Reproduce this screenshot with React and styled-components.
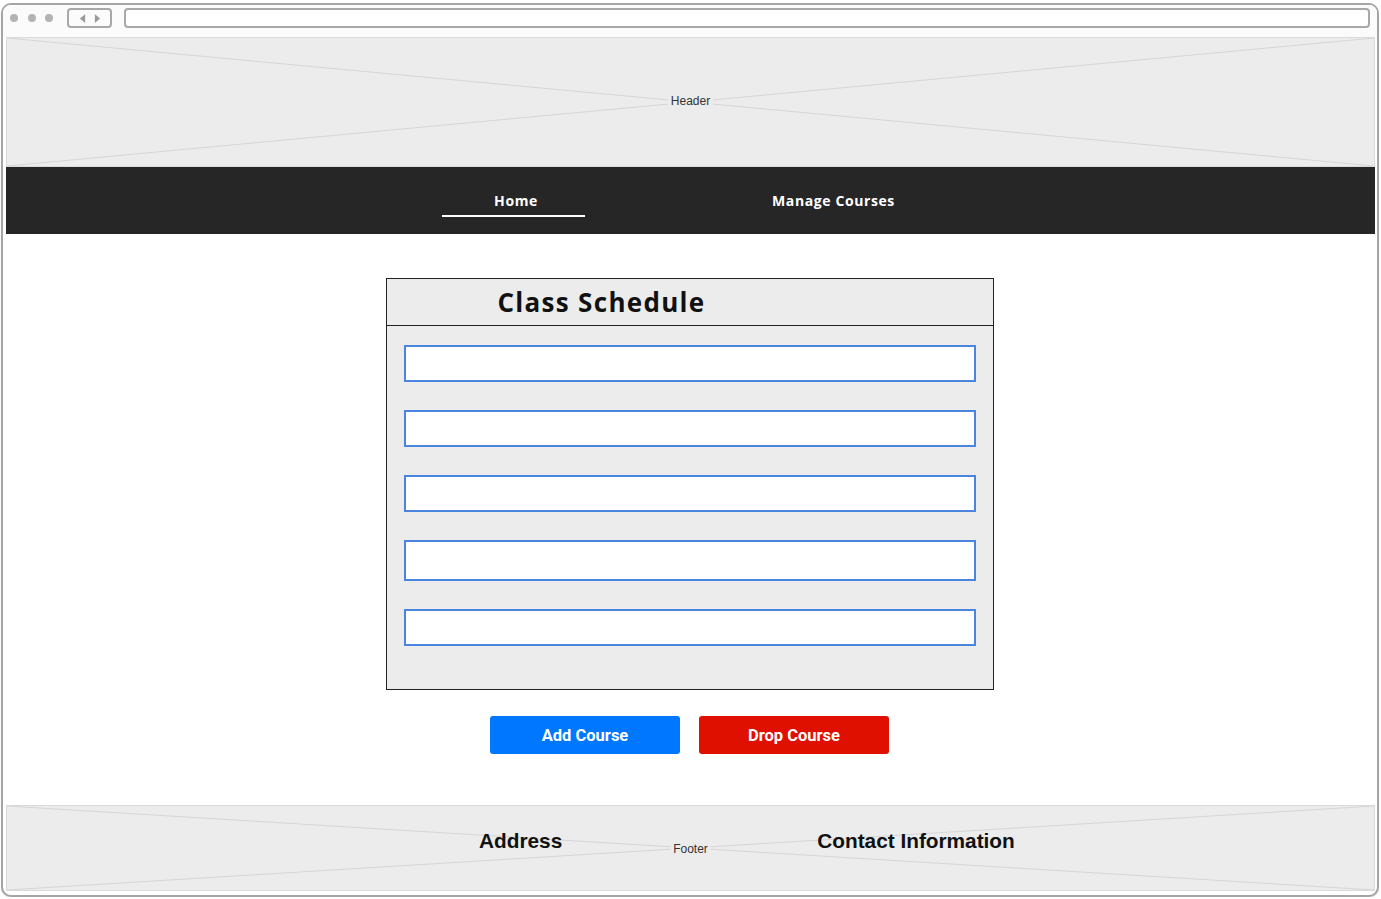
import React from "react";
import styled, { createGlobalStyle } from "styled-components";

const GlobalStyle = createGlobalStyle`
  html, body {
    margin: 0;
    padding: 0;
    background: #fff;
  }
  body {
    font-family: "Liberation Sans", Arial, sans-serif;
  }
`;

const courseSlots = [{ id: 1 }, { id: 2 }, { id: 3 }, { id: 4, tall: true }, { id: 5 }];

function CrossLines() {
  return (
    <CrossSvg viewBox="0 0 100 100" preserveAspectRatio="none">
      <line x1="0" y1="0" x2="100" y2="100" stroke="#d6d6d6" strokeWidth="1" vectorEffect="non-scaling-stroke" />
      <line x1="100" y1="0" x2="0" y2="100" stroke="#d6d6d6" strokeWidth="1" vectorEffect="non-scaling-stroke" />
    </CrossSvg>
  );
}

export default function App() {
  return (
    <>
      <GlobalStyle />
      <Window>
        <TopBar>
          <Dots>
            <Dot />
            <Dot />
            <Dot />
          </Dots>
          <NavArrows>
            <Arrow viewBox="0 0 8 12">
              <path d="M7 1 L1 6 L7 11 Z" fill="#9a9a9a" />
            </Arrow>
            <Arrow viewBox="0 0 8 12">
              <path d="M1 1 L7 6 L1 11 Z" fill="#9a9a9a" />
            </Arrow>
          </NavArrows>
          <UrlBar />
        </TopBar>

        <Content>
          <Placeholder $height={130}>
            <CrossLines />
            <PlaceholderLabel>Header</PlaceholderLabel>
          </Placeholder>

          <NavBar>
            <NavItem $active>Home</NavItem>
            <NavItem>Manage Courses</NavItem>
          </NavBar>

          <Main>
            <Panel>
              <PanelTitle>Class Schedule</PanelTitle>
              <PanelBody>
                {courseSlots.map((slot) => (
                  <CourseField key={slot.id} $tall={slot.tall} />
                ))}
              </PanelBody>
            </Panel>
            <Actions>
              <ActionButton $color="#0077ff">Add Course</ActionButton>
              <ActionButton $color="#e01000">Drop Course</ActionButton>
            </Actions>
          </Main>

          <Placeholder $height={86}>
            <CrossLines />
            <PlaceholderLabel $footer>Footer</PlaceholderLabel>
            <FooterRow>
              <FooterHeading>Address</FooterHeading>
              <FooterHeading>Contact Information</FooterHeading>
            </FooterRow>
          </Placeholder>
        </Content>
      </Window>
    </>
  );
}

const Window = styled.div`
  box-sizing: border-box;
  margin: 3px 0 0 1px;
  width: 1378px;
  height: 894px;
  border: 2px solid #a5a5a5;
  border-radius: 10px;
  background: #fff;
  display: flex;
  flex-direction: column;
  overflow: hidden;
  box-shadow: 0 1px 1px rgba(0, 0, 0, 0.12);
`;

const TopBar = styled.div`
  height: 32px;
  flex: none;
  display: flex;
  align-items: flex-start;
  padding: 3px 0 0 7px;
  box-sizing: border-box;
  background: #fbfbfb;
`;

const Dots = styled.div`
  display: flex;
  gap: 9.5px;
  margin-top: 6px;
`;

const Dot = styled.span`
  width: 8px;
  height: 8px;
  border-radius: 50%;
  background: #b3b3b3;
`;

const NavArrows = styled.div`
  box-sizing: border-box;
  margin-left: 14px;
  width: 45px;
  height: 20px;
  border: 2px solid #a8a8a8;
  border-radius: 4px;
  display: flex;
  align-items: center;
  justify-content: center;
  gap: 8px;
`;

const Arrow = styled.svg`
  width: 7px;
  height: 11px;
`;

const UrlBar = styled.div`
  box-sizing: border-box;
  margin-left: 12px;
  width: 1246px;
  height: 20px;
  border: 2px solid #a8a8a8;
  border-radius: 4px;
  background: #fff;
`;

const Content = styled.div`
  flex: 1;
  display: flex;
  flex-direction: column;
  padding: 0 2px 4px 3px;
`;

const Placeholder = styled.div`
  position: relative;
  box-sizing: border-box;
  height: ${(p) => p.$height}px;
  flex: none;
  background: #ececec;
  border: 1px solid #dadada;
  display: flex;
  align-items: center;
  justify-content: center;
`;

const CrossSvg = styled.svg`
  position: absolute;
  inset: 0;
  width: 100%;
  height: 100%;
`;

const PlaceholderLabel = styled.span`
  position: relative;
  background: #ececec;
  padding: 0 3px;
  margin-top: -2px;
  font-family: "Liberation Sans", Arial, sans-serif;
  font-size: 12px;
  color: #333;
  ${(p) =>
    p.$footer
      ? "position: absolute; left: 50%; top: 50%; margin-top: 1px; transform: translate(-50%, -50%);"
      : ""}
`;

const FooterRow = styled.div`
  position: absolute;
  inset: 0;
  display: flex;
  align-items: center;
  padding: 0 0 14px 472px;
  gap: 255px;
`;

const FooterHeading = styled.span`
  font-family: "Liberation Sans", Arial, sans-serif;
  font-weight: 700;
  font-size: 20.8px;
  color: #111;
`;

const NavBar = styled.nav`
  height: 67px;
  flex: none;
  background: #262626;
  display: flex;
  align-items: stretch;
  padding-left: 436px;
  gap: 177px;
`;

const NavItem = styled.div`
  box-sizing: border-box;
  width: 143px;
  display: flex;
  align-items: center;
  justify-content: center;
  padding-bottom: 1px;
  padding-left: ${(p) => (p.$active ? 5 : 0)}px;
  font-family: "Open Sans", "Noto Sans", sans-serif;
  font-weight: 700;
  font-size: 14px;
  letter-spacing: 0.6px;
  color: #fff;
  position: relative;
  &::after {
    content: "";
    position: absolute;
    left: 0;
    right: 0;
    top: 48px;
    height: 2px;
    background: ${(p) => (p.$active ? "#fff" : "transparent")};
  }
`;

const Main = styled.main`
  flex: 1;
  display: flex;
  flex-direction: column;
  align-items: center;
  padding-top: 44px;
  padding-right: 2px;
`;

const Panel = styled.section`
  box-sizing: border-box;
  width: 608px;
  height: 412px;
  border: 1px solid #222;
  background: #ececec;
  display: flex;
  flex-direction: column;
`;

const PanelTitle = styled.h2`
  margin: 0;
  height: 47px;
  box-sizing: border-box;
  border-bottom: 1px solid #222;
  padding-left: 111px;
  display: flex;
  align-items: center;
  font-family: "Open Sans", "Noto Sans", sans-serif;
  font-weight: 700;
  font-size: 26px;
  letter-spacing: 1.3px;
  color: #111;
`;

const PanelBody = styled.div`
  display: flex;
  flex-direction: column;
  gap: 28px;
  padding: 19px 17px 0;
`;

const CourseField = styled.div`
  box-sizing: border-box;
  height: ${(p) => (p.$tall ? 41 : 37)}px;
  background: #fff;
  border: 2px solid #4a86e0;
`;

const Actions = styled.div`
  display: flex;
  gap: 19px;
  margin-top: 26px;
`;

const ActionButton = styled.button`
  width: 190px;
  height: 38px;
  border: none;
  border-radius: 3px;
  background: ${(p) => p.$color};
  color: #fff;
  font-family: Roboto, "Liberation Sans", sans-serif;
  font-weight: 700;
  font-size: 16.5px;
  cursor: pointer;
`;
